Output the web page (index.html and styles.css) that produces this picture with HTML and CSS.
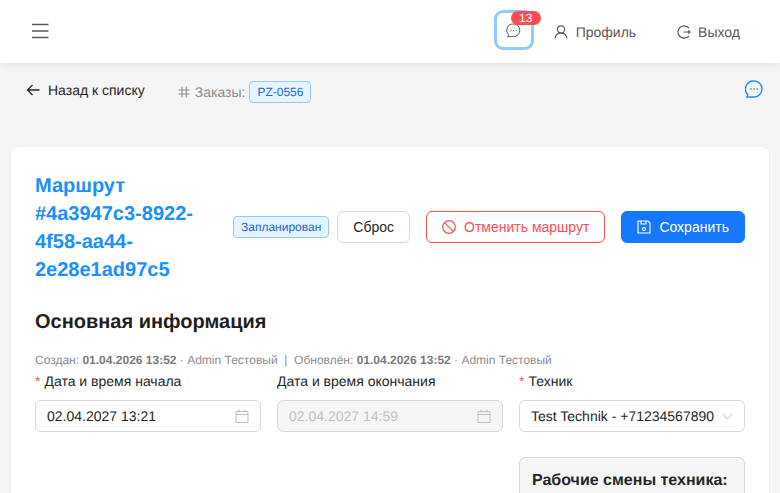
FILE: index.html
```html
<!DOCTYPE html>
<html lang="ru">
<head>
<meta charset="utf-8">
<title>Маршрут</title>
<link rel="stylesheet" href="styles.css">
</head>
<body>
<header class="topbar">
  <button class="burger" aria-label="Меню"><svg width="17" height="16" viewBox="0 0 17 16"><path d="M0 1.500h16.500M0 8h16.500M0 14.500h16.500" stroke="#595959" stroke-width="1.300" fill="none"/></svg></button>
  <div class="top-actions">
    <div class="chat-btn">
      <svg width="15" height="15" viewBox="0 0 15 15" fill="none"><path d="M7.500 1a6.300 6.300 0 0 1 0 12.600H1.600l1-1.800A6.300 6.300 0 0 1 7.500 1z" stroke="#595959" stroke-width="1"/><path d="M4.700 7.300h.9M7.100 7.300h.9M9.500 7.300h.9" stroke="#595959" stroke-width="1"/></svg>
      <span class="badge">13</span>
    </div>
    <a class="top-link profile"><svg width="14" height="14" viewBox="0 0 14 14" fill="none" stroke="#595959" stroke-width="1.200"><circle cx="7" cy="4.500" r="3.600"/><path d="M1.200 13.400c.3-3.200 2.700-5.200 5.800-5.200s5.500 2 5.800 5.200"/></svg>Профиль</a>
    <a class="top-link logout"><svg width="15" height="14" viewBox="0 0 15 14" fill="none" stroke="#595959" stroke-width="1.200"><path d="M13 3.200A6.200 6.200 0 1 0 13 10.800"/><path d="M7.500 7H14M12.300 5.500 14 7l-1.700 1.500"/></svg>Выход</a>
  </div>
</header>

<div class="crumbs">
  <a class="back"><svg width="14" height="12" viewBox="0 0 14 12" fill="none" stroke="#262626" stroke-width="1.300"><path d="M13.500 6H1.500M6.500 1 1.500 6l5 5"/></svg>Назад к списку</a>
  <span class="orders"><svg width="12" height="12" viewBox="0 0 12 12" fill="none" stroke="#8c8c8c" stroke-width="1.100"><path d="M4 .5v11M8.300 .5v11M.5 4h11M.5 8h11"/></svg>Заказы:</span>
  <span class="tag tag-order">PZ-0556</span>
  <svg class="chat-float" width="18" height="18" viewBox="0 0 18 18" fill="none"><path d="M9 1a8 8 0 0 1 0 16H1.700l1.200-2.300A8 8 0 0 1 9 1z" stroke="#1890ff" stroke-width="1.400"/><path d="M5.200 9h1.300M8.400 9h1.300M11.600 9h1.300" stroke="#1890ff" stroke-width="1.400"/></svg>
</div>

<main class="card">
  <div class="title-row">
    <h1 class="route-title">Маршрут #4a3947c3-8922-4f58-aa44-2e28e1ad97c5</h1>
    <span class="tag tag-status">Запланирован</span>
    <button class="btn btn-reset">Сброс</button>
    <button class="btn btn-cancel"><svg width="14" height="14" viewBox="0 0 14 14" fill="none" stroke="#ff4d4f" stroke-width="1.200"><circle cx="7" cy="7" r="6.300"/><path d="M2.600 2.600l8.800 8.800"/></svg>Отменить маршрут</button>
    <button class="btn btn-save"><svg width="14" height="14" viewBox="0 0 14 14" fill="none" stroke="#fff" stroke-width="1.100"><path d="M1 1h10l2 2v10H1z"/><path d="M4 1v3h5V1"/><circle cx="7" cy="9" r="1.500"/></svg>Сохранить</button>
  </div>

  <h2 class="section-title">Основная информация</h2>

  <p class="meta">Создан: <b>01.04.2026 13:52</b> · Admin Тестовый &nbsp;|&nbsp; Обновлён: <b>01.04.2026 13:52</b> · Admin Тестовый</p>

  <div class="form-grid">
    <div class="field">
      <label class="field-label"><span class="req">*</span>Дата и время начала</label>
      <div class="input"><span>02.04.2027 13:21</span><svg class="ico" width="14" height="14" viewBox="0 0 14 14" fill="none" stroke="#bfbfbf"><path d="M1 2.500h12v11H1zM1 5.500h12M4 .5v3M10 .5v3"/></svg></div>
    </div>
    <div class="field">
      <label class="field-label">Дата и время окончания</label>
      <div class="input input-disabled"><span>02.04.2027 14:59</span><svg class="ico" width="14" height="14" viewBox="0 0 14 14" fill="none" stroke="#bfbfbf"><path d="M1 2.500h12v11H1zM1 5.500h12M4 .5v3M10 .5v3"/></svg></div>
    </div>
    <div class="field">
      <label class="field-label"><span class="req">*</span>Техник</label>
      <div class="input"><span>Test Technik - +71234567890</span><svg class="ico" width="11" height="7" viewBox="0 0 11 7" fill="none" stroke="#bfbfbf"><path d="M.5 .5 5.500 6l5-5.500"/></svg></div>
      <div class="shifts"><h3 class="shifts-title">Рабочие смены техника:</h3></div>
    </div>
  </div>
</main>
</body>
</html>
```

FILE: styles.css
```css
* { box-sizing: border-box; }
html, body { height: 100%; }
body {
  margin: 0;
  height: 493px;
  overflow: hidden;
  background: #f5f5f5;
  color: #262626;
  font-family: "Liberation Sans", Arial, sans-serif;
  font-size: 14px;
  line-height: 22px;
  text-rendering: geometricPrecision;
}
.topbar {
  height: 63px;
  background: #fff;
  box-shadow: 0 2px 8px rgba(0, 0, 0, .08);
  display: flex;
  align-items: center;
  justify-content: space-between;
  padding: 0 40px 0 32px;
}
.burger { padding: 0; border: 0; background: none; display: flex; margin-top: -1px; }
.top-actions { display: flex; align-items: center; }
.chat-btn {
  width: 40px;
  height: 40px;
  border: 3px solid #91caff;
  border-radius: 9px;
  display: flex;
  align-items: center;
  justify-content: center;
  position: relative;
  margin-top: -3px;
}
.badge {
  position: absolute;
  top: -2px;
  left: 14px;
  width: 30px;
  height: 14px;
  border-radius: 7px;
  background: #ff4d4f;
  color: #fff;
  font-size: 12px;
  line-height: 14px;
  text-align: center;
}
.top-link { display: flex; align-items: center; gap: 8px; color: #595959; }
.profile { margin-left: 20px; }
.logout { margin-left: 40px; gap: 7px; }

.crumbs { position: relative; display: flex; align-items: center; height: 56px; padding: 2px 0 0 26px; }
.back { display: flex; align-items: center; gap: 8px; margin-top: -4px; }
.orders { display: flex; align-items: center; gap: 5px; margin-left: 33px; color: #8c8c8c; }
.tag { border: 1px solid #91caff; background: #e6f4ff; color: #1668dc; border-radius: 4px; font-size: 12px; line-height: 20px; padding: 0 7px; }
.tag-order { margin-left: 4px; }
.chat-float { position: absolute; left: 745px; top: 17px; }

.card {
  margin: 28px 11px 0;
  height: 400px;
  background: #fff;
  border-radius: 8px;
  box-shadow: 0 1px 4px rgba(0, 0, 0, .06);
  padding: 24px;
}
.title-row { display: flex; align-items: center; }
.route-title {
  width: 198px;
  margin: 0 0 -1px;
  padding-top: 1px;
  font-size: 20px;
  line-height: 28px;
  color: #1890ff;
  font-weight: 700;
  overflow-wrap: anywhere;
}
.tag-status { white-space: nowrap; margin-right: 8px; }
.btn {
  height: 32px;
  border-radius: 6px;
  border: 1px solid #d9d9d9;
  background: #fff;
  font: inherit;
  display: flex;
  align-items: center;
  justify-content: center;
  gap: 8px;
  padding: 0 15px;
  color: #262626;
}
.btn-cancel { margin-left: 16px; border-color: #ff4d4f; color: #ff4d4f; }
.btn-save { margin-left: 16px; background: #1677ff; border-color: #1677ff; color: #fff; }

.section-title { margin: 25px 0 0; font-size: 20px; line-height: 28px; font-weight: 700; color: #1f1f1f; }
.meta { margin: 14px 0 0; font-size: 12px; line-height: 20px; color: #8c8c8c; }
.meta b { color: #7a7a7a; }

.form-grid { display: grid; grid-template-columns: 226px 226px 226px; column-gap: 16px; }
.field-label { display: block; height: 30px; line-height: 22px; }
.req { color: #ff4d4f; margin-right: 4px; }
.input {
  height: 32px;
  border: 1px solid #d9d9d9;
  border-radius: 6px;
  display: flex;
  align-items: center;
  justify-content: space-between;
  padding: 0 11px;
  background: #fff;
  white-space: nowrap;
}
.input-disabled { background: #f5f5f5; color: #bfbfbf; }
.shifts { margin-top: 25px; height: 100px; background: #f5f5f5; border: 1px solid #d9d9d9; border-radius: 6px; padding: 12px; }
.shifts-title { margin: 0; font-size: 16px; line-height: 22px; font-weight: 700; }
```
